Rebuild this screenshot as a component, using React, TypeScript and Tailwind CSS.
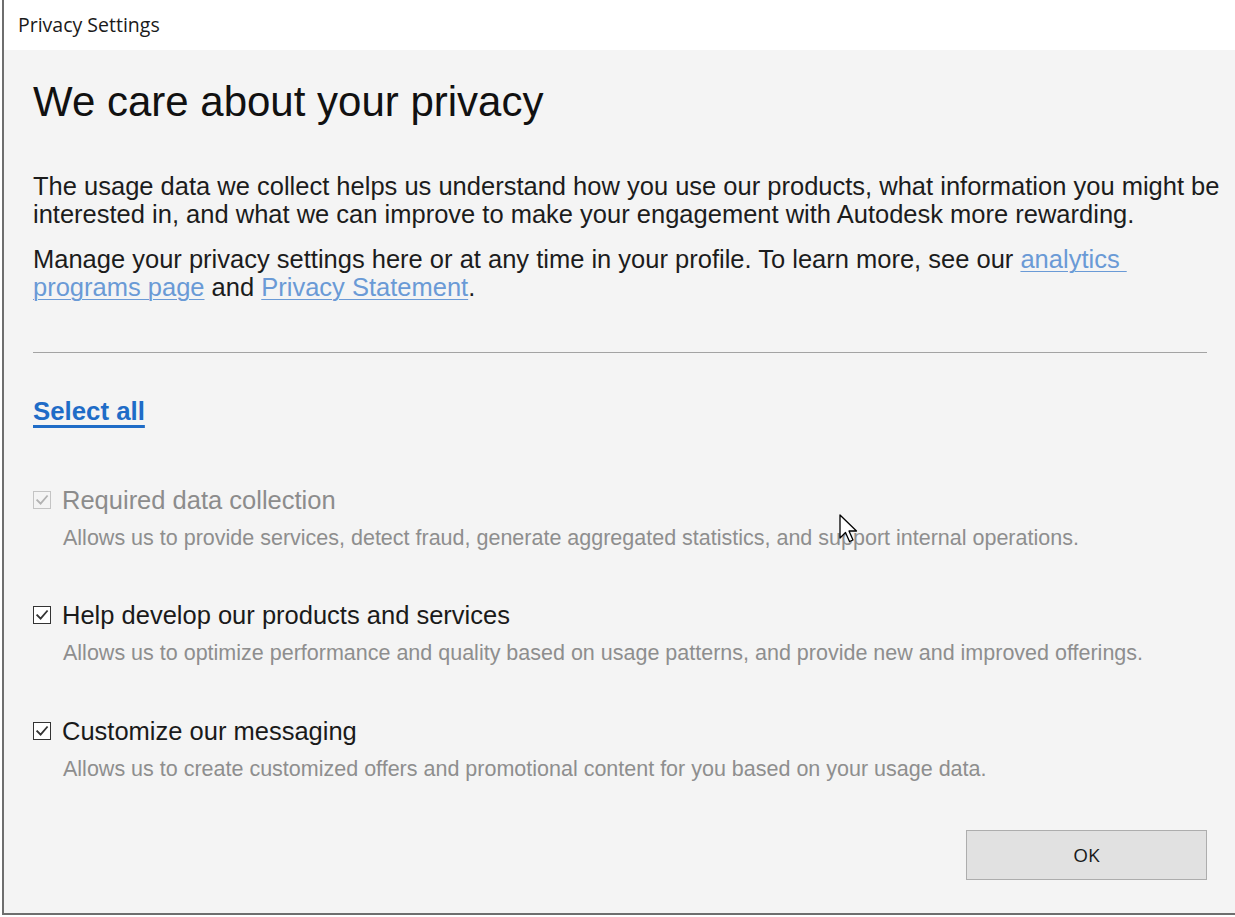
import React from "react";

function Check({ disabled }: { disabled?: boolean }) {
  return (
    <span
      className={
        "inline-flex h-[18px] w-[18px] shrink-0 items-center justify-center border-[1.5px] " +
        (disabled ? "border-[#c4c4c4] bg-[#f4f4f4]" : "border-[#333333] bg-white")
      }
    >
      <svg width="14" height="14" viewBox="0 0 14 14" fill="none">
        <path
          d="M2.2 7.2 L5.6 10.6 L12 3.2"
          stroke={disabled ? "#b2b2b2" : "#333333"}
          strokeWidth="1.8"
          strokeLinecap="square"
        />
      </svg>
    </span>
  );
}

function Item({
  label,
  desc,
  disabled,
  className,
}: {
  label: string;
  desc: string;
  disabled?: boolean;
  className?: string;
}) {
  return (
    <div className={className}>
      <div className="flex h-[30px] items-center gap-[11px]">
        <Check disabled={disabled} />
        <span
          className={
            "whitespace-nowrap text-[25.5px] leading-[30px] " +
            (disabled ? "text-[#8c8c8c]" : "text-[#1a1a1a]")
          }
        >
          {label}
        </span>
      </div>
      <div className="mt-[10px] whitespace-nowrap pl-[30px] text-[21.5px] leading-[26px] text-[#8e8e8e]">
        {desc}
      </div>
    </div>
  );
}

export default function App() {
  return (
    <div
      className="h-[917px] w-[1235px] overflow-hidden bg-white pl-[2px]"
      style={{ fontFamily: '"Liberation Sans", Arial, sans-serif' }}
    >
      <div className="relative flex h-[915px] flex-col border-b-2 border-l-2 border-[#6e6e6e]">
        <div
          className="flex h-[50px] shrink-0 items-center bg-white pl-[14px] text-[19.5px] text-[#1a1a1a]"
          style={{ fontFamily: '"Open Sans", "Noto Sans", sans-serif' }}
        >
          Privacy Settings
        </div>
        <div className="flex flex-1 flex-col bg-[#f4f4f4] pl-[29px] pr-[28px]">
          <h1 className="mt-[28px] whitespace-nowrap text-[42px] leading-[48px] text-[#111111]">
            We care about your privacy
          </h1>
          <p className="mt-[46px] text-[25.5px] leading-[28px] text-[#1c1c1c]">
            <span className="block whitespace-nowrap">
              The usage data we collect helps us understand how you use our products, what information you might be
            </span>
            <span className="block whitespace-nowrap">
              interested in, and what we can improve to make your engagement with Autodesk more rewarding.
            </span>
          </p>
          <p className="mt-[17px] text-[25.5px] leading-[28px] text-[#1c1c1c]">
            <span className="block whitespace-nowrap">
              Manage your privacy settings here or at any time in your profile. To learn more, see our{" "}
              <span className="text-[#6a9ad6] underline decoration-1 underline-offset-[3px]">analytics&nbsp;</span>
            </span>
            <span className="block whitespace-nowrap">
              <span className="text-[#6a9ad6] underline decoration-1 underline-offset-[3px]">programs page</span> and{" "}
              <span className="text-[#6a9ad6] underline decoration-1 underline-offset-[3px]">Privacy Statement</span>.
            </span>
          </p>
          <div className="mt-[51px] h-px bg-[#a3a3a3]" />
          <div className="mt-[43px] h-[30px]">
            <span className="text-[25.8px] font-bold leading-[30px] text-[#1f6cc7] underline decoration-[3px] underline-offset-[5px]">
              Select all
            </span>
          </div>
          <Item
            className="mt-[59px]"
            disabled
            label="Required data collection"
            desc="Allows us to provide services, detect fraud, generate aggregated statistics, and support internal operations."
          />
          <Item
            className="mt-[49px]"
            label="Help develop our products and services"
            desc="Allows us to optimize performance and quality based on usage patterns, and provide new and improved offerings."
          />
          <Item
            className="mt-[50px]"
            label="Customize our messaging"
            desc="Allows us to create customized offers and promotional content for you based on your usage data."
          />
          <div className="mt-[48px] flex justify-end">
            <button
              className="flex h-[50px] w-[241px] items-center justify-center border border-[#adadad] bg-[#e1e1e1] text-[19px] text-[#1a1a1a]"
              style={{ fontFamily: '"Open Sans", "Noto Sans", sans-serif' }}
            >
              OK
            </button>
          </div>
        </div>
        <svg
          className="pointer-events-none absolute left-[835px] top-[514px]"
          width="20"
          height="30"
          viewBox="0 0 20 30"
        >
          <path
            d="M1 1 L1 24 L6.5 18.5 L10.5 27.5 L14 26 L10 17 L17.5 17 Z"
            fill="white"
            stroke="black"
            strokeWidth="1.3"
            strokeLinejoin="round"
          />
        </svg>
      </div>
    </div>
  );
}
